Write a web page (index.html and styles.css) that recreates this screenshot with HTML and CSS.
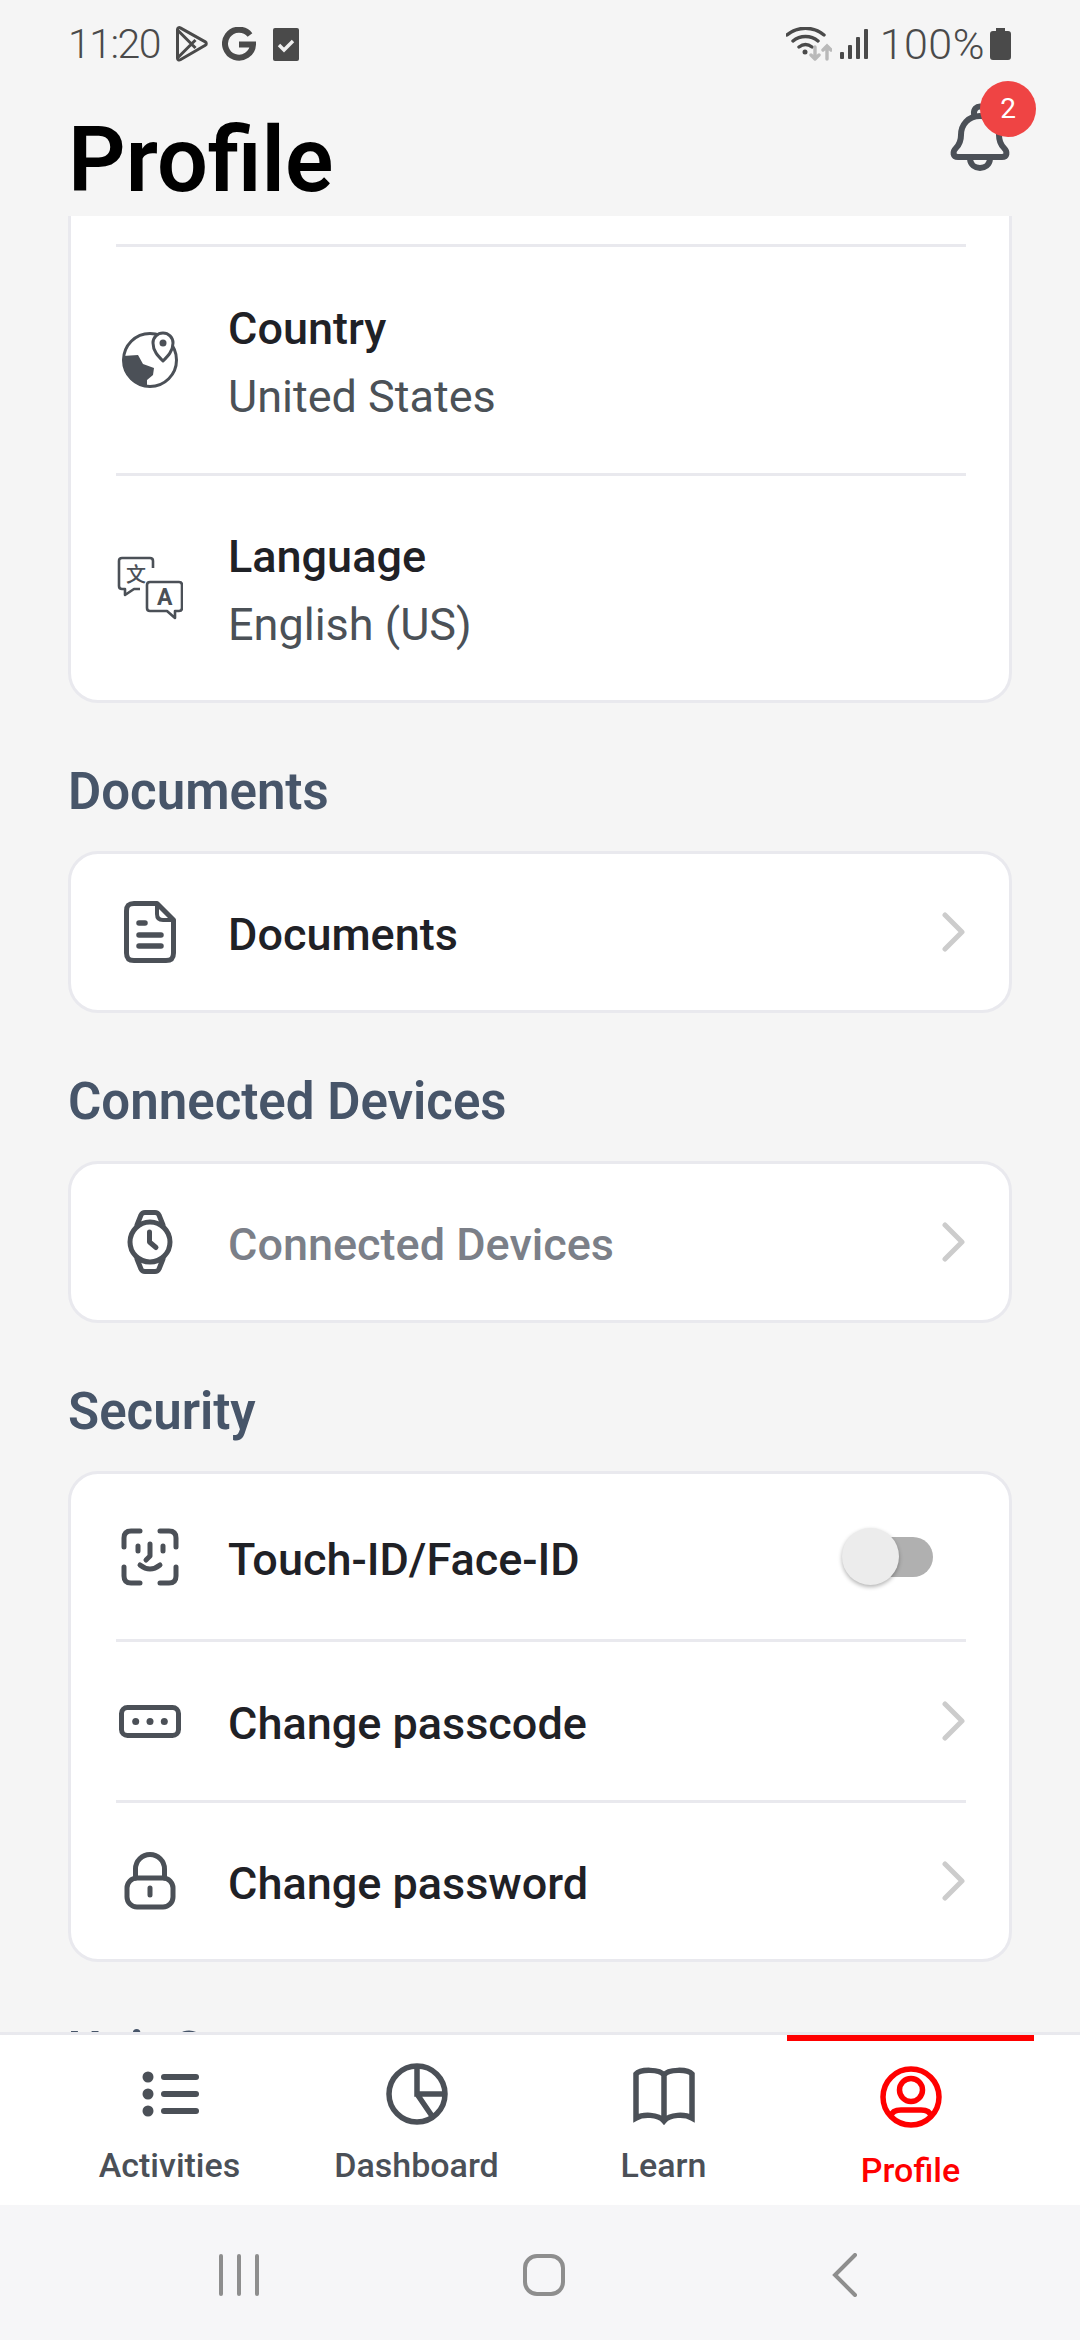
FILE: index.html
```html
<!DOCTYPE html>
<html lang="en">
<head>
  <meta charset="UTF-8">
  <title>Profile</title>
  <link rel="stylesheet" href="styles.css">
</head>
<body>
  <header class="top">
    <div class="status">
      <div class="status-side">
        <span class="clock">11:20</span>
        <svg class="st-play" viewBox="0 0 34 36" fill="none" stroke="#4a4a4a" stroke-width="3" stroke-linejoin="round"><path d="M3 3.500c0-1.500 1.500-2.300 2.800-1.600l25 14c1.300.8 1.300 2.700 0 3.400l-25 14.500c-1.300.7-2.800-.1-2.800-1.600z"/><path d="M3 4l18 18M3 32l18-18"/></svg>
        <svg class="st-g" viewBox="0 0 34 34" fill="none" stroke="#4a4a4a" stroke-width="6"><path d="M28 8a14 14 0 1 0 3 9.500H17"/></svg>
        <svg class="st-check" viewBox="0 0 26 33"><rect y="0" width="26" height="33" rx="2" fill="#4a4a4a"/><path d="M6 17l5 5 9-9" fill="none" stroke="#f0f0f0" stroke-width="3.400"/></svg>
      </div>
      <div class="status-side">
        <svg class="st-wifi" viewBox="0 0 46 34" fill="none" stroke="#4a4a4a" stroke-width="3.400" stroke-linecap="round"><path d="M1 8c11-9 26-9 37 0M7 14c7-6 18-6 25 0M13 20c4-3 9-3 13 0"/><circle cx="19" cy="25" r="2.500" fill="#4a4a4a" stroke="none"/><path stroke="#b9b9b9" d="M29 20v12M25 28l4 4 4-4M41 32V19M37 23l4-4 4 4"/></svg>
        <svg class="st-bars" viewBox="0 0 28 30" fill="#4a4a4a"><rect x="0" y="23" width="4" height="7" rx="1"/><rect x="8" y="16" width="4" height="14" rx="1"/><rect x="16" y="8" width="4" height="22" rx="1"/><rect x="24" y="0" width="4" height="30" rx="1"/></svg>
        <span class="battery-text">100%</span>
        <svg class="st-batt" viewBox="0 0 21 32"><path fill="#4a4a4a" d="M6 0h9v3h3c2 0 3 1 3 3v23c0 2-1 3-3 3H3c-2 0-3-1-3-3V6c0-2 1-3 3-3h3z"/></svg>
      </div>
    </div>
    <div class="title-row">
      <h1>Profile</h1>
      <div class="bell">
        <svg viewBox="0 0 62 68" fill="none" stroke="#4b5057" stroke-width="6" stroke-linecap="round" stroke-linejoin="round"><path d="M31 13C19 13 12 22 12 32c0 6-1 9-5 13-4 4-3 9 2 9h44c5 0 6-5 2-9-4-4-5-7-5-13 0-10-7-19-19-19z"/><path d="M21 56c1 12 19 12 20 0M25 11c-1-10 13-10 12 0"/></svg>
        <span class="badge">2</span>
      </div>
    </div>
  </header>

  <main class="scroll">
    <section class="card card-first">
      <div class="row-stub"></div>
      <div class="row row-tall">
        <svg class="ico" viewBox="0 0 66 66"><circle cx="33" cy="33" r="26.500" fill="none" stroke="#4b5057" stroke-width="3"/><path fill="#4b5057" d="M6 29l15-1 5 9 11 4-1 7-6 5v7A27 27 0 0 1 6 29z"/><path fill="#fff" stroke="#4b5057" stroke-width="3" stroke-linejoin="round" d="M46 34c-5-5-10-10-10-18a10 10 0 0 1 20 0c0 8-5 13-10 18z"/><circle cx="46" cy="16" r="3.500" fill="#4b5057"/></svg>
        <div class="row-text">
          <span class="row-title">Country</span>
          <span class="row-sub">United States</span>
        </div>
      </div>
      <div class="row row-last">
        <svg class="ico" viewBox="0 0 66 66" fill="none" stroke="#4b5057" stroke-width="2.600" stroke-linejoin="round"><path d="M36 13V6c0-2-1-3-3-3H5C3 3 2 4 2 6v25c0 2 1 3 3 3h3v6l9-6h6"/><path d="M33 27h29c2 0 3 1 3 3v23c0 2-1 3-3 3h-4v7l-8-7H33c-2 0-3-1-3-3V30c0-2 1-3 3-3z"/><text class="ico-zh" x="9" y="27">文</text><text class="ico-en" x="40" y="50">A</text></svg>
        <div class="row-text">
          <span class="row-title">Language</span>
          <span class="row-sub">English (US)</span>
        </div>
      </div>
    </section>

    <h2>Documents</h2>
    <section class="card">
      <div class="row row-single">
        <svg class="ico" viewBox="0 0 66 66" fill="none" stroke="#4b5057" stroke-width="5" stroke-linecap="round" stroke-linejoin="round"><path d="M40 4.500H17C11.500 4.500 9.500 7 9.500 12v42c0 5 2 7.500 7.500 7.500h32c5.500 0 7.500-2.500 7.500-7.500V21z"/><path d="M40 5v10c0 4 2 6 6 6h10" stroke-width="4"/><path d="M22 24h6M22 36h22M22 47h22" stroke-width="5.500"/></svg>
        <span class="row-title">Documents</span>
        <svg class="chev" viewBox="0 0 24 40" fill="none" stroke="#cccccc" stroke-width="5" stroke-linecap="round" stroke-linejoin="round"><path d="M3 3l17 17L3 37"/></svg>
      </div>
    </section>

    <h2>Connected Devices</h2>
    <section class="card">
      <div class="row row-single">
        <svg class="ico" viewBox="0 0 66 66" fill="none" stroke="#4b5057" stroke-width="5" stroke-linecap="round" stroke-linejoin="round"><circle cx="33" cy="33" r="20"/><path d="M20 16l4-10c1-2 2-2.500 4-2.500h10c2 0 3 .5 4 2.500l4 10M20 50l4 10c1 2 2 2.500 4 2.500h10c2 0 3-.5 4-2.500l4-10"/><path d="M32.500 23v10l6.500 5.500"/></svg>
        <span class="row-title muted">Connected Devices</span>
        <svg class="chev" viewBox="0 0 24 40" fill="none" stroke="#cccccc" stroke-width="5" stroke-linecap="round" stroke-linejoin="round"><path d="M3 3l17 17L3 37"/></svg>
      </div>
    </section>

    <h2>Security</h2>
    <section class="card">
      <div class="row row-face">
        <svg class="ico" viewBox="0 0 66 66" fill="none" stroke="#4b5057" stroke-width="5" stroke-linecap="round" stroke-linejoin="round"><path d="M23 7h-9c-5 0-7 2.500-7 7v9M43 7h9c5 0 7 2.500 7 7v9M23 59h-9c-5 0-7-2.500-7-7v-9M43 59h9c5 0 7-2.500 7-7v-9"/><path d="M21 22v5M46 22v5M33 20v12l-4 4M23 41q10 8 20 0"/></svg>
        <span class="row-title">Touch-ID/Face-ID</span>
        <div class="toggle"><span class="knob"></span></div>
      </div>
      <div class="row">
        <svg class="ico" viewBox="0 0 66 66" fill="none" stroke="#4b5057" stroke-width="5"><rect x="4.500" y="19.500" width="57" height="28" rx="6"/><circle cx="18.700" cy="33.500" r="3.500" fill="#4b5057" stroke="none"/><circle cx="33" cy="33.500" r="3.500" fill="#4b5057" stroke="none"/><circle cx="47.300" cy="33.500" r="3.500" fill="#4b5057" stroke="none"/></svg>
        <span class="row-title">Change passcode</span>
        <svg class="chev" viewBox="0 0 24 40" fill="none" stroke="#cccccc" stroke-width="5" stroke-linecap="round" stroke-linejoin="round"><path d="M3 3l17 17L3 37"/></svg>
      </div>
      <div class="row row-single">
        <svg class="ico" viewBox="0 0 66 66" fill="none" stroke="#4b5057" stroke-width="5" stroke-linecap="round"><rect x="10" y="30" width="46" height="29" rx="10"/><path d="M18.500 30v-9a14.500 14.500 0 0 1 29 0v9M33 40v7"/></svg>
        <span class="row-title">Change password</span>
        <svg class="chev" viewBox="0 0 24 40" fill="none" stroke="#cccccc" stroke-width="5" stroke-linecap="round" stroke-linejoin="round"><path d="M3 3l17 17L3 37"/></svg>
      </div>
    </section>

    <h2>Unit System</h2>
  </main>

  <nav class="tabs">
    <div class="tab">
      <svg class="tab-ico" viewBox="0 0 60 62" fill="#4b5057"><circle cx="8" cy="14" r="5.500"/><circle cx="8" cy="31" r="5.500"/><circle cx="8" cy="48" r="5.500"/><rect x="21" y="11" width="38" height="6" rx="3"/><rect x="21" y="28" width="38" height="6" rx="3"/><rect x="21" y="45" width="38" height="6" rx="3"/></svg>
      <span>Activities</span>
    </div>
    <div class="tab">
      <svg class="tab-ico" viewBox="0 0 62 62" fill="none" stroke="#4b5057" stroke-width="5.500"><circle cx="31" cy="31" r="28"/><path d="M31 3v28h28M31 31l15 22"/></svg>
      <span>Dashboard</span>
    </div>
    <div class="tab">
      <svg class="tab-ico" viewBox="0 0 62 62" fill="none" stroke="#4b5057" stroke-width="5.500"><path d="M31 12c-4-6-24-6-28-1v44c7-4 22-4 28 3 6-7 21-7 28-3V11c-4-5-24-5-28 1zM31 12v44"/></svg>
      <span>Learn</span>
    </div>
    <div class="tab active">
      <svg class="tab-ico" viewBox="0 0 62 62" fill="none" stroke="#ff0000" stroke-width="5.500"><circle cx="31" cy="31" r="28"/><circle cx="31" cy="24" r="11.500"/><path d="M11 50c1-5 5-6 10-6h20c5 0 9 1 10 6"/></svg>
      <span>Profile</span>
    </div>
  </nav>

  <footer class="sysnav">
    <svg class="sys-ico" viewBox="0 0 42 44" fill="#8e8e8e"><rect x="1" y="1" width="4" height="42" rx="2"/><rect x="19" y="1" width="4" height="42" rx="2"/><rect x="37" y="1" width="4" height="42" rx="2"/></svg>
    <svg class="sys-ico" viewBox="0 0 42 44" fill="none" stroke="#8e8e8e" stroke-width="4"><rect x="2" y="3" width="38" height="38" rx="12"/></svg>
    <svg class="sys-ico" viewBox="0 0 42 44" fill="none" stroke="#8e8e8e" stroke-width="4" stroke-linecap="round"><path d="M27 2L7 22l20 20"/></svg>
  </footer>
</body>
</html>
```

FILE: styles.css
```css
* {
  box-sizing: border-box;
}

html, body {
  margin: 0;
  padding: 0;
}

body {
  width: 1080px;
  height: 2340px;
  display: flex;
  flex-direction: column;
  overflow: hidden;
  background: #f5f5f5;
  font-family: Roboto, "Noto Sans", sans-serif;
  color: #1f2126;
}

.top {
  height: 216px;
  padding: 0 68px;
  flex-shrink: 0;
}

.status {
  height: 88px;
  display: flex;
  justify-content: space-between;
  align-items: center;
  color: #4a4a4a;
  font-size: 41px;
  font-weight: 300;
}

.status-side {
  display: flex;
  align-items: center;
}

.clock {
  letter-spacing: -1.5px;
  margin-right: 14px;
}

.st-play { width: 35px; height: 36px; margin-right: 13px; }
.st-g { width: 34px; height: 34px; margin-right: 17px; }
.st-check { width: 26px; height: 33px; }
.st-wifi { width: 46px; height: 34px; margin-right: 8px; }
.st-bars { width: 28px; height: 30px; margin-right: 12px; }
.st-batt { width: 21px; height: 32px; margin-left: 5px; margin-right: 1px; }

.battery-text {
  font-size: 43px;
  letter-spacing: 0.5px;
}

.title-row {
  display: flex;
  justify-content: space-between;
  position: relative;
}

h1 {
  margin: 0;
  font-size: 90px;
  line-height: 96px;
  font-weight: 600;
  color: #000;
  padding-top: 25px;
}

.bell {
  position: absolute;
  top: 15px;
  right: 1px;
  width: 62px;
  height: 68px;
}

.bell svg {
  display: block;
  width: 62px;
  height: 68px;
}

.badge {
  position: absolute;
  top: -22px;
  right: -25px;
  width: 56px;
  height: 56px;
  border-radius: 50%;
  background: #ef4444;
  color: #fff;
  font-size: 28px;
  line-height: 56px;
  text-align: center;
}

.scroll {
  flex: 1;
  min-height: 0;
  overflow: hidden;
  padding: 0 68px;
}

h2 {
  margin: 0;
  height: 148px;
  padding-top: 63px;
  font-size: 51px;
  line-height: 52px;
  font-weight: 600;
  color: #475569;
}

.card {
  background: #fff;
  border: 3px solid #e9e9ee;
  border-radius: 30px;
  padding: 0 43px 0 45px;
}

.card-first {
  margin-top: -30px;
}

.row-stub {
  height: 58px;
  border-bottom: 3px solid #e9e9ee;
}

.row {
  display: flex;
  align-items: center;
  height: 161px;
  border-bottom: 3px solid #e9e9ee;
}

.row-tall {
  height: 229px;
}

.row-last {
  height: 224px;
  border-bottom: none;
}

.row-face {
  height: 168px;
}

.row-single {
  height: 156px;
  border-bottom: none;
}

.ico {
  width: 66px;
  height: 66px;
  margin-left: 1px;
  margin-right: 45px;
  flex-shrink: 0;
}

.ico-zh {
  font-family: "Noto Sans CJK SC", sans-serif;
  font-size: 20px;
  font-weight: 500;
  fill: #4b5057;
  stroke: none;
}

.ico-en {
  font-family: Roboto, sans-serif;
  font-size: 23px;
  font-weight: 700;
  fill: #4b5057;
  stroke: none;
}

.row-text {
  display: flex;
  flex-direction: column;
  gap: 14px;
  padding-top: 5px;
}

.row-title {
  font-size: 45px;
  line-height: 54px;
  font-weight: 500;
  flex: 1;
}

.row > .row-title {
  padding-top: 6px;
}

.muted {
  color: #7b7f88;
}

.row-sub {
  font-size: 45px;
  line-height: 54px;
  color: #4b5157;
}

.chev {
  width: 24px;
  height: 40px;
}

.toggle {
  position: relative;
  width: 62px;
  height: 40px;
  margin-right: 33px;
  border-radius: 20px;
  background: #b0b0b0;
}

.knob {
  position: absolute;
  left: -29px;
  top: -9px;
  width: 57px;
  height: 57px;
  border-radius: 50%;
  background: #ececec;
  box-shadow: 0 2px 4px rgba(0, 0, 0, 0.3);
}

.tabs {
  height: 173px;
  flex-shrink: 0;
  display: flex;
  background: #fff;
  border-top: 3px solid #e9e9ee;
  padding-left: 46px;
}

.tab {
  width: 247px;
  display: flex;
  flex-direction: column;
  align-items: center;
  padding-top: 28px;
  font-size: 34px;
  font-weight: 500;
  color: #4b5057;
}

.tab-ico {
  width: 62px;
  height: 62px;
  margin-bottom: 20px;
}

.tab span {
  line-height: 40px;
}

.active {
  color: #ff0000;
  border-top: 6px solid #ff0000;
  padding-top: 25px;
}

.active .tab-ico {
  margin-bottom: 22px;
}

.sysnav {
  height: 135px;
  flex-shrink: 0;
  display: flex;
  justify-content: space-between;
  align-items: center;
  padding: 4px 210px 0 218px;
  background: #f6f6f8;
}

.sys-ico {
  width: 42px;
  height: 44px;
}
```
